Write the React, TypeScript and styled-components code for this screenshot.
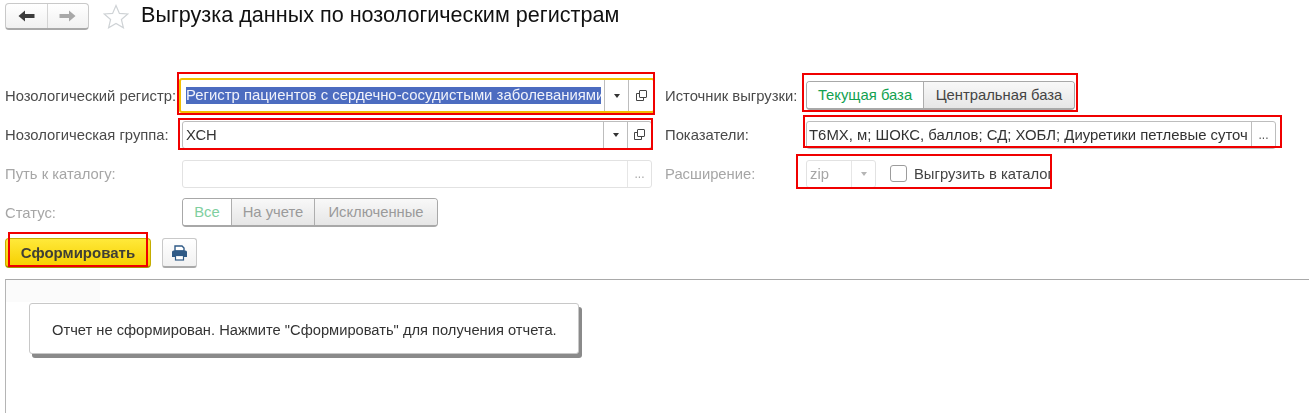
import React from 'react'
import styled, { createGlobalStyle } from 'styled-components'

const GlobalStyle = createGlobalStyle`
  html, body {
    margin: 0;
    padding: 0;
    background: #fff;
  }
  body {
    font-family: 'Liberation Sans', Arial, sans-serif;
    font-size: 14.8px;
    color: #4a4a4a;
  }
`

const Page = styled.div`
  position: relative;
  width: 1309px;
  height: 413px;
  overflow: hidden;
  display: flex;
  flex-direction: column;
  filter: blur(0.4px);
`

const Header = styled.header`
  height: 30px;
  padding: 1px 0 0 5px;
  display: flex;
  align-items: center;
`

const NavGroup = styled.div`
  width: 84px;
  height: 27px;
  box-sizing: border-box;
  display: flex;
  border: 1px solid #c9c9c9;
  border-bottom: 2px solid #a9a9a9;
  border-radius: 4px;
  background: linear-gradient(#fff, #f1f1f1);
`

const NavButton = styled.div`
  flex: 1;
  display: flex;
  align-items: center;
  justify-content: center;
  & + & {
    border-left: 1px solid #d4d4d4;
  }
`

const StarIcon = styled.svg`
  width: 26px;
  height: 25px;
  margin: 0 12px 0 14px;
`

const Title = styled.h1`
  margin: 0;
  font-size: 21.6px;
  font-weight: 400;
  color: #111;
  white-space: nowrap;
  transform: translateY(-1px);
`

const Form = styled.div`
  margin-top: 45px;
  padding-left: 5px;
  display: grid;
  grid-template-columns: 177px 470px 13px 141px auto;
  grid-auto-rows: 39px;
  align-items: center;
  justify-content: start;
`

const Label = styled.div<{ $muted?: boolean; $col: number }>`
  grid-column: ${p => p.$col};
  color: ${p => (p.$muted ? '#a6a6a6' : '#4a4a4a')};
  white-space: nowrap;
`

const Field = styled.div<{ $active?: boolean; $muted?: boolean; $width: number }>`
  width: ${p => p.$width}px;
  height: ${p => (p.$active ? 35 : 28)}px;
  box-sizing: border-box;
  display: flex;
  align-items: center;
  background: #fff;
  border-radius: 3px;
  border: ${p => (p.$active ? '2px solid #f2bf00' : `1px solid ${p.$muted ? '#e2e2e2' : '#bdbdbd'}`)};
  margin-left: ${p => (p.$active ? -3 : 0)}px;
  padding-left: ${p => (p.$active ? 5 : 3)}px;
  color: ${p => (p.$muted ? '#a6a6a6' : '#333')};
`

const FieldText = styled.div`
  flex: 1;
  min-width: 0;
  overflow: hidden;
  white-space: nowrap;
`

const IndicatorText = styled(FieldText)`
  font-size: 14.9px;
  margin-left: -1px;
`

const Selected = styled.span`
  display: block;
  background: #4c6cc0;
  color: #f0f2fa;
  height: 17px;
  line-height: 17px;
  overflow: hidden;
  margin-right: 3px;
  font-size: 14.9px;
`

const FieldButton = styled.div<{ $width: number; $muted?: boolean }>`
  width: ${p => p.$width}px;
  height: 100%;
  flex: none;
  display: flex;
  align-items: center;
  justify-content: center;
  box-sizing: border-box;
  border-left: 1px solid ${p => (p.$muted ? '#e6e6e6' : '#bdbdbd')};
  color: ${p => (p.$muted ? '#a6a6a6' : '#555')};
  font-size: 12px;
`

const Caret = styled.i<{ $muted?: boolean }>`
  width: 0;
  height: 0;
  border-left: 3px solid transparent;
  border-right: 3px solid transparent;
  border-top: 4px solid ${p => (p.$muted ? '#b5b5b5' : '#333')};
`

const Tumbler = styled.div`
  justify-self: start;
  display: inline-flex;
  height: 29px;
  box-sizing: border-box;
  border: 1px solid #a8a8a8;
  border-bottom-width: 2px;
  border-radius: 4px;
  overflow: hidden;
`

const TumblerItem = styled.div<{ $on?: boolean; $muted?: boolean; $width: number }>`
  width: ${p => p.$width}px;
  box-sizing: border-box;
  display: flex;
  align-items: center;
  justify-content: center;
  background: ${p => (p.$on ? '#fff' : 'linear-gradient(#f8f8f8, #e6e6e6)')};
  color: ${p => (p.$on ? (p.$muted ? '#7fcf9f' : '#12a150') : p.$muted ? '#9a9a9a' : '#444')};
  & + & {
    border-left: 1px solid #aeaeae;
  }
`

const ExtensionRow = styled.div`
  display: flex;
  align-items: center;
`

const Checkbox = styled.div`
  width: 17px;
  height: 17px;
  box-sizing: border-box;
  margin: 0 7px 0 14px;
  border: 1px solid #9c9c9c;
  border-radius: 3px;
  background: #fff;
`

const ClippedText = styled.div`
  width: 138px;
  overflow: hidden;
  white-space: nowrap;
  color: #444;
`

const Actions = styled.div`
  margin-top: 6px;
  padding-left: 5px;
  display: flex;
  gap: 11px;
`

const GenerateButton = styled.div`
  width: 146px;
  height: 30px;
  box-sizing: border-box;
  display: flex;
  align-items: center;
  justify-content: center;
  border: 1px solid #c4ad00;
  border-bottom: 2px solid #a89400;
  border-radius: 4px;
  background: linear-gradient(#ffe93a, #f6d000);
  color: #3f3f35;
  font-size: 15px;
  font-weight: 700;
`

const PrintButton = styled.div`
  width: 35px;
  height: 30px;
  box-sizing: border-box;
  display: flex;
  align-items: center;
  justify-content: center;
  border: 1px solid #c9c9c9;
  border-bottom: 2px solid #a9a9a9;
  border-radius: 3px;
  background: linear-gradient(#fff, #f1f1f1);
`

const Report = styled.div`
  flex: 1;
  margin: 11px 0 0 5px;
  position: relative;
  border-top: 1px solid #a9a9a9;
  border-left: 1px solid #b5b5b5;
  padding: 23px 0 0 23px;
`

const ReportCorner = styled.div`
  position: absolute;
  left: 0;
  top: 0;
  width: 94px;
  height: 22px;
  background: #fbfbfb;
`

const Message = styled.div`
  position: relative;
  width: 550px;
  height: 51px;
  box-sizing: border-box;
  display: flex;
  align-items: center;
  padding: 2px 0 0 22px;
  background: #fff;
  border: 1px solid #c8c8c8;
  border-radius: 3px;
  box-shadow: 3px 4px 0 #8a8a8a;
  color: #333;
  font-size: 14.7px;
  white-space: nowrap;
`

const Annotation = styled.div<{ $x: number; $y: number; $w: number; $h: number }>`
  position: absolute;
  left: ${p => p.$x}px;
  top: ${p => p.$y}px;
  width: ${p => p.$w}px;
  height: ${p => p.$h}px;
  box-sizing: border-box;
  border: 2px solid #f00000;
  pointer-events: none;
`

const Arrow = ({ color, flip }: { color: string; flip?: boolean }) => (
  <svg width="17" height="12" viewBox="0 0 17 12" style={flip ? { transform: 'scaleX(-1)' } : undefined}>
    <path d="M0.5 6 L7 0.5 V4 H16.5 V8 H7 V11.5 Z" fill={color} />
  </svg>
)

const CopyIcon = () => (
  <svg width="11" height="11" viewBox="0 0 11 11" fill="none" stroke="#444" strokeWidth="1">
    <rect x="3.5" y="0.5" width="7" height="7" rx="0.5" />
    <path d="M3.5 3.5 H0.5 V10.5 H7.5 V7.5" />
  </svg>
)

const PrinterIcon = () => (
  <svg width="17" height="16" viewBox="0 0 17 16">
    <path d="M4 1 H11 L13 3 V6 H4 Z" fill="#fff" stroke="#2f5a86" strokeWidth="1.4" />
    <path d="M1 7 a1.5 1.5 0 0 1 1.5 -1.5 H14.5 a1.5 1.5 0 0 1 1.5 1.5 V12 H13 V10 H4 V12 H1 Z" fill="#2f5a86" />
    <rect x="4.5" y="10.5" width="8" height="4.5" fill="#fff" stroke="#2f5a86" strokeWidth="1.2" />
  </svg>
)

const App = () => (
  <>
    <GlobalStyle />
    <Page>
      <Header>
        <NavGroup>
          <NavButton>
            <Arrow color="#3c3c3c" />
          </NavButton>
          <NavButton>
            <Arrow color="#a8a8a8" flip />
          </NavButton>
        </NavGroup>
        <StarIcon viewBox="0 0 26 25" fill="none" stroke="#cfd3d6" strokeWidth="1.2">
          <path d="M13 1.5 L16.4 9.4 L24.8 10 L18.4 15.5 L20.4 23.8 L13 19.4 L5.6 23.8 L7.6 15.5 L1.2 10 L9.6 9.4 Z" />
        </StarIcon>
        <Title>Выгрузка данных по нозологическим регистрам</Title>
      </Header>

      <Form>
        <Label $col={1}>Нозологический регистр:</Label>
        <Field $active $width={476}>
          <FieldText>
            <Selected>Регистр пациентов с сердечно-сосудистыми заболеваниями</Selected>
          </FieldText>
          <FieldButton $width={24}>
            <Caret />
          </FieldButton>
          <FieldButton $width={25}>
            <CopyIcon />
          </FieldButton>
        </Field>
        <Label $col={4}>Источник выгрузки:</Label>
        <Tumbler>
          <TumblerItem $on $width={116}>Текущая база</TumblerItem>
          <TumblerItem $width={151}>Центральная база</TumblerItem>
        </Tumbler>

        <Label $col={1}>Нозологическая группа:</Label>
        <Field $width={470}>
          <FieldText>ХСН</FieldText>
          <FieldButton $width={24}>
            <Caret />
          </FieldButton>
          <FieldButton $width={24}>
            <CopyIcon />
          </FieldButton>
        </Field>
        <Label $col={4}>Показатели:</Label>
        <Field $width={470}>
          <IndicatorText>Т6МХ, м; ШОКС, баллов; СД; ХОБЛ; Диуретики петлевые суточ</IndicatorText>
          <FieldButton $width={24}>...</FieldButton>
        </Field>

        <Label $col={1} $muted>Путь к каталогу:</Label>
        <Field $muted $width={470}>
          <FieldText />
          <FieldButton $width={24} $muted>...</FieldButton>
        </Field>
        <Label $col={4} $muted>Расширение:</Label>
        <ExtensionRow>
          <Field $muted $width={70}>
            <FieldText>zip</FieldText>
            <FieldButton $width={24} $muted>
              <Caret $muted />
            </FieldButton>
          </Field>
          <Checkbox />
          <ClippedText>Выгрузить в каталог</ClippedText>
        </ExtensionRow>

        <Label $col={1} $muted>Статус:</Label>
        <Tumbler>
          <TumblerItem $on $muted $width={48}>Все</TumblerItem>
          <TumblerItem $muted $width={83}>На учете</TumblerItem>
          <TumblerItem $muted $width={123}>Исключенные</TumblerItem>
        </Tumbler>
      </Form>

      <Actions>
        <GenerateButton>Сформировать</GenerateButton>
        <PrintButton>
          <PrinterIcon />
        </PrintButton>
      </Actions>

      <Report>
        <ReportCorner />
        <Message>Отчет не сформирован. Нажмите "Сформировать" для получения отчета.</Message>
      </Report>

      <Annotation $x={177} $y={72} $w={478} $h={43} />
      <Annotation $x={178} $y={118} $w={475} $h={32} />
      <Annotation $x={802} $y={73} $w={276} $h={39} />
      <Annotation $x={803} $y={115} $w={479} $h={33} />
      <Annotation $x={796} $y={154} $w={256} $h={35} />
      <Annotation $x={8} $y={232} $w={140} $h={35} />
    </Page>
  </>
)

export default App
